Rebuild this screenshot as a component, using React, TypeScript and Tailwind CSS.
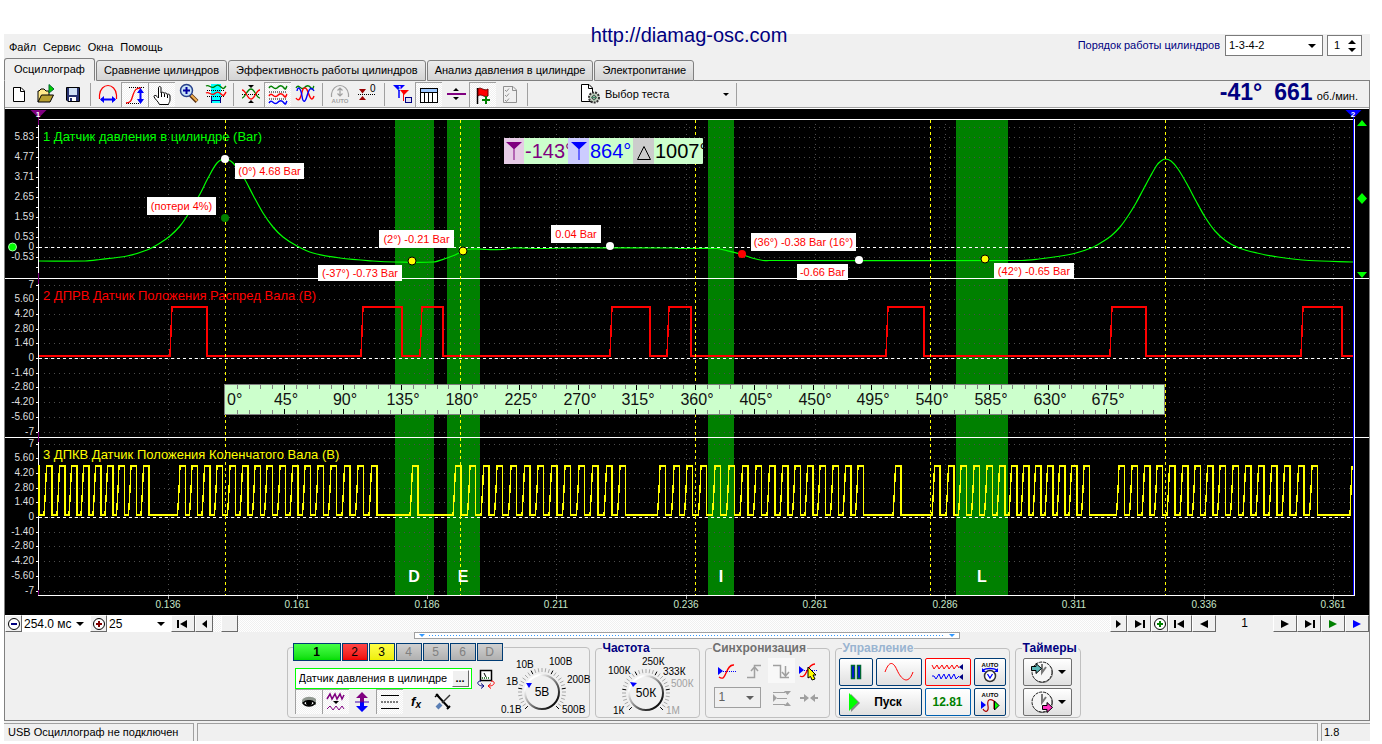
import type { ReactNode } from "react";
import clsx from "clsx";

type Pt = [number, number];

/* ---------- chart data ---------- */

const pressure: Pt[] = [
  [39, 261], [85, 261], [100, 259.5], [127, 256], [147, 250], [160, 243], [170, 236], [180, 226],
  [189, 213], [200, 194], [208, 178], [217, 163], [225, 159], [233, 163], [244, 178], [253, 195],
  [263, 213], [273, 227], [283, 237], [297, 246], [313, 253], [340, 258], [373, 261], [395, 262],
  [433, 262], [447, 258], [455, 255], [463, 251], [472, 249], [487, 249.5], [503, 249.5], [513, 248],
  [540, 248.5], [573, 248], [673, 248], [680, 248.5], [717, 248.5], [724, 250], [742, 254.5], [752, 258],
  [763, 260.5], [769, 260.5], [1022, 260.5], [1039, 259], [1061, 256], [1076, 253], [1091, 248], [1102, 242],
  [1111, 236], [1120, 227], [1128, 216], [1136, 203], [1143, 190], [1150, 177], [1157, 165], [1161, 161],
  [1165, 159], [1171, 161], [1178, 169], [1187, 184], [1196, 201], [1205, 217], [1215, 231], [1226, 241],
  [1239, 248], [1257, 253], [1278, 257], [1309, 260.5], [1353, 262],
];

const camPulses: Pt[] = [
  [172, 207], [363, 402], [422, 443], [612, 650], [669, 691], [888, 924], [1112, 1146], [1303, 1342],
];

const crankPulses = [
  46.5, 59.5, 71.5, 83.5, 95.5, 107.5, 119, 131, 143.5,
  180, 192, 204.5, 217, 230, 242.5, 255, 267, 280, 292.5, 305, 318, 331, 344.5, 358, 371.5,
  412.5, 455.5, 470, 483.6, 497, 511, 524.5, 538, 551.5, 565, 579, 592.5, 606.5, 620,
  660, 674, 687, 701, 715, 729, 742.5, 756, 769.5, 782.5, 795, 807.5, 820, 833, 845.5, 858,
  895.5, 934.5, 948.5, 961, 974, 987, 999.5, 1011.5, 1023.5, 1035.5, 1047.5, 1059.5, 1071.5, 1084,
  1119, 1132, 1144.5, 1157, 1169.5, 1182.5, 1195, 1207.5, 1220, 1233, 1245.5, 1258.5, 1271.5, 1284.5,
  1298.5, 1312,
];

const barTicks: [string, number][] = [
  ["5.83", 137], ["4.77", 157], ["3.71", 177], ["2.65", 197], ["1.59", 217], ["0.53", 237], ["0", 247], ["-0.53", 257],
];
const voltTicks = ["7", "5.60", "4.20", "2.80", "1.40", "0", "-1.40", "-2.80", "-4.20", "-5.60", "-7"];
const voltY = (zero: number, i: number) => Math.round(zero + (i - 5) * 14.7);

const timeTicks: [string, number][] = [
  ["0.136", 168], ["0.161", 297], ["0.186", 427], ["0.211", 556], ["0.236", 686],
  ["0.261", 815], ["0.286", 945], ["0.311", 1074], ["0.336", 1204], ["0.361", 1333],
];

const bands: [string, number, number, number][] = [
  ["D", 395, 39, 414], ["E", 447, 33, 463], ["I", 708, 26, 721], ["L", 956, 52, 982],
];

const notes: [string, number, number, number, number][] = [
  ["(0°) 4.68 Bar", 235, 163, 69, 16],
  ["(потери 4%)", 147, 197, 69, 18],
  ["(2°) -0.21 Bar", 379, 230, 75, 18],
  ["(-37°) -0.73 Bar", 318, 265, 84, 16],
  ["0.04 Bar", 551, 225, 50, 18],
  ["(36°) -0.38 Bar (16°)", 751, 233, 105, 18],
  ["-0.66 Bar", 797, 264, 51, 16],
  ["(42°) -0.65 Bar", 994, 263, 80, 16],
];

const dots: [number, number, string][] = [
  [225, 159, "#fff"], [225, 218, "#008000"], [412, 261, "#ff0"], [463, 251, "#ff0"],
  [610, 246, "#fff"], [742, 254, "#f00"], [859, 260, "#fff"], [985, 259, "#ff0"],
];

function smooth(p: Pt[]) {
  let d = `M${p[0][0]} ${p[0][1]}`;
  for (let i = 0; i < p.length - 1; i++) {
    const a = p[Math.max(i - 1, 0)], b = p[i], c = p[i + 1], e = p[Math.min(i + 2, p.length - 1)];
    const dx = (c[0] - b[0]) / 3;
    const s1 = (c[1] - a[1]) / (c[0] - a[0]);
    const s2 = (e[1] - b[1]) / (e[0] - b[0]);
    d += `C${b[0] + dx} ${b[1] + s1 * dx} ${c[0] - dx} ${c[1] - s2 * dx} ${c[0]} ${c[1]}`;
  }
  return d;
}

const camPath =
  "M39 356" + camPulses.map(([a, b]) => `H${a - 2}L${a - 1} 331L${a} 307H${b}V356`).join("") + "H1353";
const crankPath =
  "M39 465V515" +
  crankPulses.map((x) => `H${x - 2.5}L${x - 1} 490L${x} 466H${x + 5.5}V515`).join("") +
  "H1350L1352 466";

function Chart() {
  const rows = [
    ...Array.from({ length: 15 }, (_, i) => 127 + i * 10),
    ...voltTicks.map((_, i) => voltY(358, i)),
    ...voltTicks.map((_, i) => voltY(517, i)),
  ];
  return (
    <svg viewBox="5 109 1364 506" className="block w-full bg-black font-['Liberation_Sans',sans-serif]">
      <g shapeRendering="crispEdges">
        {bands.map(([k, x, w]) => (
          <rect key={k} x={x} y={120} width={w} height={475} fill="#008000" />
        ))}
        <g stroke="#4c4c4c" strokeDasharray="1 4">
          {rows.map((y) => <path key={y} d={`M44 ${y + 0.5}H1353`} />)}
          {timeTicks.map(([t, x]) => <path key={t} d={`M${x + 0.5} 124V595`} />)}
        </g>
        <g stroke="#fff">
          <path d="M39 247.5H1353M39 358.5H1353M39 517.5H1353" strokeDasharray="3 3" />
          <path d="M38 119.5H1355M5 278.5H1369M5 437.5H1369M38 595.5H1355M38.5 119V596M1354.5 119V596" />
          {rows.map((y) => <path key={y} d={`M36 ${y + 0.5}H39`} />)}
          <path d="M36 247.5H39" />
        </g>
        <path
          d={timeTicks.map(([, x]) => `M${x + 0.5} 596V599`).join("")}
          stroke="#aaa"
        />
        <path d="M38.5 117V125M38.5 273V284M38.5 432V442M38.5 590V595" stroke="#800080" />
        <path d="M1353.5 118V595" stroke="#0000ff" />
      </g>

      <g fontSize="10" fill="#dfdfdf" textAnchor="end">
        {barTicks.map(([t, y]) => <text key={t} x="34" y={y + 3}>{t}</text>)}
        {voltTicks.map((t, i) => <text key={t} x="34" y={voltY(358, i) + 3}>{t}</text>)}
        {voltTicks.map((t, i) => <text key={t} x="34" y={voltY(517, i) + 3}>{t}</text>)}
      </g>
      <g fontSize="10" fill="#c8e6c8" textAnchor="middle">
        {timeTicks.map(([t, x]) => <text key={t} x={x} y="608">{t}</text>)}
      </g>
      <g fontSize="16" fontWeight="bold" fill="#fff" textAnchor="middle">
        {bands.map(([k, , , c]) => <text key={k} x={c} y="582">{k}</text>)}
      </g>
      <g fontSize="13">
        <text x="43" y="141" fill="#0f0">1 Датчик давления в цилиндре (Bar)</text>
        <text x="43" y="300" fill="#f00">2 ДПРВ Датчик Положения Распред Вала (В)</text>
        <text x="43" y="459" fill="#ff0">3 ДПКВ Датчик Положения Коленчатого Вала (В)</text>
      </g>

      <g fill="none">
        <path d={smooth(pressure)} stroke="#0f0" strokeWidth="1.2" />
        <path d={camPath} stroke="#f00" strokeWidth="1.5" shapeRendering="crispEdges" />
        <path d={crankPath} stroke="#ff0" strokeWidth="1.4" shapeRendering="crispEdges" />
        <path
          d="M225.5 120V595M460.5 120V595M695.5 120V595M930.5 120V595M1165.5 120V595"
          stroke="#ff0" strokeDasharray="3 3" shapeRendering="crispEdges"
        />
      </g>

      {notes.map(([t, x, y, w, h]) => (
        <g key={t}>
          <rect x={x} y={y} width={w} height={h} fill="#fff" />
          <text x={x + w / 2} y={y + h / 2 + 4} fontSize="11" fill="#f00" textAnchor="middle">{t}</text>
        </g>
      ))}
      {dots.map(([x, y, c]) => (
        <circle key={x + c} cx={x} cy={y} r="4" fill={c} stroke={c === "#ff0" ? "#000" : "none"} />
      ))}
      <circle cx="12.5" cy="247" r="4" fill="#0f0" stroke="#a0ffa0" />

      {/* cursors */}
      <path d="M30.5 110H46.5L38.5 118Z" fill="#800080" />
      <path d="M1345.5 110H1361.5L1353.5 118Z" fill="#0000ff" />
      <g fontSize="8" fontWeight="bold" fill="#fff" textAnchor="middle">
        <text x="38" y="117">1</text>
        <text x="1353" y="117">2</text>
      </g>
      <path d="M1362 120L1367 126H1357ZM1362 193L1367 198.5L1362 204L1357 198.5ZM1357 272H1367L1362 278Z" fill="#0f0" />

      {/* degree ruler */}
      <g shapeRendering="crispEdges">
        <rect x="224.5" y="384.5" width="940" height="30" fill="#ccffcc" stroke="#808080" />
        {Array.from({ length: 79 }, (_, i) => i + 1).map((i) => {
          const x = Math.round(225 + i * 11.75) + 0.5;
          const major = i % 5 === 0;
          const n = major ? 5 : 4;
          return <path key={i} d={`M${x} 385V${385 + n}M${x} 414V${414 - n}`} stroke={major ? "#000" : "#808080"} />;
        })}
      </g>
      <g fontSize="16" fill="#111">
        <text x="227" y="405">0°</text>
        {Array.from({ length: 15 }, (_, i) => i + 1).map((i) => (
          <text key={i} x={Math.round(227 + i * 58.75)} y="405" textAnchor="middle">{i * 45}°</text>
        ))}
      </g>

      {/* cursor readout */}
      <g>
        <rect x="504" y="138" width="199" height="26" rx="1" fill="#ccffcc" />
        <rect x="504" y="138" width="20" height="26" fill="#e6cce6" />
        <rect x="568" y="138" width="21" height="26" fill="#ccccff" />
        <rect x="633" y="138" width="21" height="26" fill="#cccccc" />
        <path d="M506 142H522L514.5 149V160H513.5V149Z" fill="#800080" />
        <path d="M571 142H587L579.5 149V160H578.5V149Z" fill="#0000ff" />
        <path d="M644 146.5L650.5 159.5H637.5Z" fill="none" stroke="#000" />
        <g fontSize="20">
          <svg x="524" y="138" width="44" height="26"><text x="1" y="20" fill="#800080">-143°</text></svg>
          <svg x="589" y="138" width="44" height="26"><text x="1" y="20" fill="#0000ff">864°</text></svg>
          <svg x="654" y="138" width="49" height="26"><text x="1" y="20" fill="#000">1007°</text></svg>
        </g>
      </g>
    </svg>
  );
}

/* ---------- icons ---------- */

function Svg({ w = 22, h = 22, children }: { w?: number; h?: number; children: ReactNode }) {
  return (
    <svg width={w} height={h} viewBox={`0 0 ${w} ${h}`} fill="none" className="shrink-0">
      {children}
    </svg>
  );
}

const IconNew = () => (
  <Svg>
    <path d="M5.5 4.5H13L16.5 8V18.5H5.5Z" fill="#fff" stroke="#000" />
    <path d="M12.5 4.5V8.5H16.5" stroke="#000" />
  </Svg>
);
const IconOpen = () => (
  <Svg>
    <path d="M3 19V8H4L6 6H9L11 8H14V12" fill="#ffe98a" stroke="#000" />
    <path d="M3 19L6.5 12H18.5L15 19Z" fill="#b8a030" stroke="#000" />
    <path d="M14 1.5V10L19 6Z" fill="#00d000" stroke="#063" />
  </Svg>
);
const IconSave = () => (
  <Svg>
    <path d="M4.5 4.5H17.5V18.5H6L4.5 17Z" fill="#26306e" stroke="#000" />
    <rect x="7" y="5" width="8" height="7" fill="#cfe0f5" />
    <rect x="7" y="14" width="7" height="4" fill="#fff" />
    <rect x="8" y="15" width="2" height="3" fill="#26306e" />
  </Svg>
);
const IconArc = () => (
  <Svg>
    <path d="M2.5 16V12C3 6 7 2.5 11 2.5S19 6 19.5 12V16" stroke="#f00" strokeWidth="1.2" />
    <path d="M4 16.5H18" stroke="#00f" strokeWidth="2" />
    <path d="M3 16.5L7 13V20ZM19 16.5L15 13V20Z" fill="#00f" />
  </Svg>
);
const IconSlope = () => (
  <Svg>
    <path d="M5 3.5H20M2 19.5H16" stroke="#000" strokeDasharray="1 1" />
    <path d="M2 19C7 19 7.5 16 9 11S12 4 17 4" stroke="#f00" strokeWidth="1.3" />
    <path d="M16.5 7V17" stroke="#00f" strokeWidth="2" />
    <path d="M16.5 4L20 9H13ZM16.5 20L20 15H13Z" fill="#00f" />
  </Svg>
);
const IconHand = () => (
  <Svg>
    <path
      d="M8.5 20.5C7 17 4 15.5 3 12.5C3 11 5 11 6 12.5L7.5 14V4C7.5 2 10 2 10 4V9C10.5 7.8 13 8 13 9.5C13.5 8.5 16 8.8 16 10.5C16.8 9.8 19 10 19 12V16C19 18 17.5 19 17.5 20.5Z"
      fill="#fff" stroke="#000"
    />
    <path d="M10.5 9V13M13.5 10V13M16.5 11V14" stroke="#000" />
  </Svg>
);
const IconZoom = () => (
  <Svg>
    <path d="M12.5 12L19 18.5" stroke="#5a3010" strokeWidth="4" />
    <path d="M13 12L19 18" stroke="#f0b050" strokeWidth="2" />
    <circle cx="8.5" cy="7.5" r="6" fill="#c9e4f7" stroke="#27408b" strokeWidth="1.5" />
    <path d="M5 7.5H12M8.5 4V11" stroke="#0000a0" strokeWidth="2" />
  </Svg>
);
const IconBandWaves = () => (
  <Svg>
    <rect x="6" y="1" width="10" height="19" fill="#00ffff" />
    <path d="M2 7.5H20M2 13.5H20" stroke="#000" strokeDasharray="1 1" />
    <path d="M1 3C4 1 6 6 9 4S13 1 16 4S19 5 21 3" stroke="#008000" strokeWidth="1.4" />
    <path d="M1 10C4 8 6 13 9 11S13 8 16 11S19 12 21 9" stroke="#f00" strokeWidth="1.4" />
    <path d="M6.5 14V20M15.5 14V20M7 17.5H15" stroke="#000080" />
  </Svg>
);
const IconCross = () => (
  <Svg>
    <path d="M2 11.5H20" stroke="#000" strokeDasharray="1 1" />
    <path d="M2 15C5 15 7 6 11 6S16 15 20 15" stroke="#008000" strokeWidth="1.3" />
    <path d="M2 7C6 7 7 16 11 16S16 7 20 7" stroke="#f00" strokeWidth="1.3" />
    <path d="M8 2H14L11 5ZM8 20H14L11 17Z" fill="#000" />
  </Svg>
);
const wave = (y: number) => `M2 ${y + 1}C5 ${y - 4} 7 ${y + 4} 10 ${y + 1}S15 ${y - 2} 17 ${y + 1}S19 ${y} 20 ${y - 1}`;
const IconThreeWaves = () => (
  <Svg>
    <path d="M2 8H20M2 15H20" stroke="#000" strokeDasharray="1 1" />
    <path d={wave(3)} stroke="#008000" strokeWidth="1.5" />
    <path d={wave(11)} stroke="#f00" strokeWidth="1.5" />
    <path d={wave(18)} stroke="#00f" strokeWidth="1.5" />
  </Svg>
);
const IconOverlay = () => (
  <Svg>
    <path d={wave(4)} stroke="#008000" strokeWidth="1.4" />
    <path d="M2 15C5 20 7 14 8 9S12 3 14 9S18 19 20 13" stroke="#f00" strokeWidth="1.4" />
    <path d="M3 8C4 2 7 6 8 13S11 20 13 13S17 3 20 8" stroke="#00f" strokeWidth="1.4" />
  </Svg>
);
const IconAutoGray = () => (
  <Svg>
    <path d="M2.5 14V11C3 6 7 2.5 11 2.5S19 6 19.5 11V14M11 5V13M8.5 7.5L11 5L13.5 7.5M8.5 10.5L11 13L13.5 10.5" stroke="#a0a0a0" strokeWidth="1.2" />
    <text x="11" y="20" fontSize="6" fontWeight="bold" fill="#a0a0a0" textAnchor="middle">AUTO</text>
  </Svg>
);
const IconZero = () => (
  <Svg>
    <path d="M2 11.5H20" stroke="#000" strokeDasharray="1 1" />
    <path d="M3 6H10L6.5 10.5ZM3 17H10L6.5 13Z" fill="#900" />
    <text x="14" y="9" fontSize="10" fill="#000">0</text>
  </Svg>
);
const IconMarkers = () => (
  <Svg>
    <path d="M2 2H14L8 8Z" fill="#00f" />
    <path d="M9 7H18L13 12Z" fill="#f00" />
    <path d="M8 6V15" stroke="#00f" strokeWidth="1.5" />
    <path d="M12.5 10V18" stroke="#f00" />
    <rect x="14.5" y="14.5" width="6" height="5" fill="#dde" stroke="#000080" />
    <text x="7" y="7" fontSize="6" fontWeight="bold" fill="#fff">1</text>
  </Svg>
);
const IconTable = () => (
  <Svg>
    <rect x="2.5" y="4.5" width="17" height="14" fill="#fff" stroke="#000" />
    <rect x="3" y="5" width="16" height="3" fill="#9cc8ff" />
    <path d="M3 8.5H19M6.5 8V18M10.5 8V18M14.5 8V18" stroke="#000" />
  </Svg>
);
const IconSplit = () => (
  <Svg>
    <path d="M2 11H21" stroke="#800080" strokeWidth="2" />
    <path d="M8 8H14L11 5ZM8 14H14L11 17Z" fill="#000" />
  </Svg>
);
const IconFlag = () => (
  <Svg>
    <path d="M5.5 4V20" stroke="#000" strokeWidth="1.5" />
    <path d="M6 5C9 2 12 8 16 5V12C12 14 9 9 6 12Z" fill="#f00" stroke="#600" />
    <path d="M10 16H18M14 12V20" stroke="#008000" strokeWidth="2" />
  </Svg>
);
const IconChecklist = () => (
  <Svg>
    <path d="M4.5 3.5H14L17.5 7V19.5H4.5ZM13.5 4V7.5H17" stroke="#909090" />
    <path d="M6 7L7.5 8.5L10 5.5M6 12L7.5 13.5L10 10.5M6 17L7.5 18.5L10 15.5" stroke="#909090" />
  </Svg>
);
const IconTest = () => (
  <Svg>
    <path d="M2.5 1.5H10L13.5 5V18.5H2.5Z" fill="#fff" stroke="#000" />
    <path d="M9.5 2V5.5H13" stroke="#000" />
    <circle cx="15" cy="14.5" r="5" fill="#c9d3c4" stroke="#333" strokeWidth="2" strokeDasharray="2 1" />
    <circle cx="15" cy="14.5" r="2" fill="#fff" stroke="#333" />
    <path d="M12 14.5H18M15 11.5V17.5" stroke="#486" />
  </Svg>
);

/* ---------- controls ---------- */

const Arrow = ({ className }: { className?: string }) => (
  <svg width="8" height="4" viewBox="0 0 8 4" className={className}><path d="M0 0H8L4 4Z" fill="currentColor" /></svg>
);

const pressed =
  "border-t border-l border-[#a0a0a0] bg-[repeating-conic-gradient(#ffffff_0_25%,#f0f0f0_0_50%)] bg-[length:2px_2px]";

function Tool({ label, on, children }: { label: string; on?: boolean; children: ReactNode }) {
  return (
    <button aria-label={label} className={clsx("flex h-[25px] w-[27px] items-center justify-center", on && pressed)}>
      {children}
    </button>
  );
}

const Sep = () => (
  <div className="flex w-2 justify-center"><div className="h-[23px] w-px bg-[#a0a0a0]" /></div>
);

function Dropdown({ label, value, className }: { label: string; value: string; className?: string }) {
  return (
    <div className={clsx("relative", className)}>
      <select aria-label={label} className="h-full w-full appearance-none bg-transparent px-[2px] outline-none">
        <option>{value}</option>
      </select>
      <Arrow className="pointer-events-none absolute top-1/2 right-[6px] -translate-y-1/2" />
    </div>
  );
}

function Toolbar() {
  return (
    <div className="flex h-[28px] items-center border-b border-b-white pb-px shadow-[inset_0_-1px_0_#a0a0a0]">
      <Tool label="Новый"><IconNew /></Tool>
      <Tool label="Открыть"><IconOpen /></Tool>
      <Tool label="Сохранить"><IconSave /></Tool>
      <Sep />
      <Tool label="Период"><IconArc /></Tool>
      <Tool label="Амплитуда" on><IconSlope /></Tool>
      <Tool label="Рука" on><IconHand /></Tool>
      <Tool label="Масштаб"><IconZoom /></Tool>
      <Tool label="Интервал"><IconBandWaves /></Tool>
      <Sep />
      <Tool label="Центрировать"><IconCross /></Tool>
      <Tool label="Раздельно" on><IconThreeWaves /></Tool>
      <Tool label="Совместно"><IconOverlay /></Tool>
      <Sep />
      <Tool label="Авто"><IconAutoGray /></Tool>
      <Tool label="Ноль"><IconZero /></Tool>
      <Sep />
      <Tool label="Маркеры"><IconMarkers /></Tool>
      <Tool label="Таблица" on><IconTable /></Tool>
      <Tool label="Разделитель"><IconSplit /></Tool>
      <Tool label="Флаг" on><IconFlag /></Tool>
      <Tool label="Список"><IconChecklist /></Tool>
      <Sep />
      <button className="ml-12 flex h-[25px] w-[153px] items-center gap-1 pr-[3px]">
        <IconTest />
        <span className="grow text-left">Выбор теста</span>
        <Arrow className="h-[3px] w-[6px]" />
      </button>
      <Sep />
      <div className="ml-auto flex items-baseline pr-[11px] text-[23px] leading-6 font-bold text-[#000080]">
        <span>-41°</span>
        <span className="ml-3">661</span>
        <span className="ml-1 text-[11px] font-normal text-black">об./мин.</span>
      </div>
    </div>
  );
}

const bevel = "border border-t-white border-l-white border-r-[#696969] border-b-[#696969] bg-[#f0f0f0]";

const nav = {
  left: "M10 0V8L5 4Z",
  right: "M4 0V8L9 4Z",
  first: "M1 0H3V8H1ZM11 0V8L4 4Z",
  last: "M3 0V8L10 4ZM11 0H13V8H11Z",
  play: "M3 0V8L11 4Z",
  back: "M11 0V8L3 4Z",
};

function NavButton({ label, d, className = "w-6 text-black" }: { label: string; d: string; className?: string }) {
  return (
    <button aria-label={label} className={clsx("flex h-[17px] items-center justify-center", bevel, className)}>
      <svg width="14" height="8" viewBox="0 0 14 8"><path d={d} fill="currentColor" /></svg>
    </button>
  );
}

function ZoomButton({ label, color, plus }: { label: string; color: string; plus?: boolean }) {
  return (
    <button aria-label={label} className={clsx("flex h-[17px] w-[17px] items-center justify-center", bevel)}>
      <Svg w={14} h={14}>
        <circle cx="7" cy="7" r="5.5" fill="#fff" stroke="#000" />
        <path d={plus ? "M4 7H10M7 4V10" : "M4 7H10"} stroke={color} strokeWidth="2" />
      </Svg>
    </button>
  );
}

function ScrollRow() {
  return (
    <div className="flex h-[17px] items-center">
      <ZoomButton label="Уменьшить" color="#000080" />
      <Dropdown label="Развёртка" value="254.0 мс" className="h-[17px] w-[68px] bg-white text-[12px] leading-4" />
      <ZoomButton label="Увеличить" color="#800000" plus />
      <Dropdown label="Шаг" value="25" className="h-[17px] w-[64px] bg-white text-[12px] leading-4" />
      <NavButton label="В начало" d={nav.first} />
      <NavButton label="Назад" d={nav.left} className="w-[18px] text-black" />
      <div className="h-[17px] grow bg-[repeating-conic-gradient(#ffffff_0_25%,#f0f0f0_0_50%)] bg-[length:2px_2px] pl-2">
        <div className={clsx("h-[17px] w-[17px]", bevel)} />
      </div>
      <NavButton label="Вперёд" d={nav.right} className="w-[17px] text-black" />
      <NavButton label="В конец" d={nav.last} />
      <ZoomButton label="Добавить кадр" color="#008000" plus />
      <NavButton label="Первый кадр" d={nav.first} />
      <NavButton label="Предыдущий кадр" d={nav.back} />
      <span className="w-[57px] text-center text-[12px]">1</span>
      <NavButton label="Следующий кадр" d={nav.play} />
      <NavButton label="Последний кадр" d={nav.last} />
      <NavButton label="Воспроизвести" d={nav.play} className="w-6 text-[#008000]" />
      <NavButton label="Воспроизвести всё" d={nav.play} className="w-6 text-[#0000ff]" />
    </div>
  );
}

type KnobLabel = [string, number, number, boolean?];

function Knob({ value, labels, className, pointer }: { value: string; labels: KnobLabel[]; className?: string; pointer: string }) {
  // ticks run clockwise from lower left to lower right
  const ticks = Array.from({ length: 31 }, (_, i) => -225 + i * 9);
  return (
    <svg width="100" height="66" viewBox="-50 -40 100 66" className={clsx("shrink-0", className)}>
      <defs>
        <linearGradient id="rim" x1="0" y1="0" x2="1" y2="1">
          <stop offset="0.2" stopColor="#fff" />
          <stop offset="0.5" stopColor="#888" />
          <stop offset="0.9" stopColor="#000" />
        </linearGradient>
      </defs>
      {ticks.map((a, i) => {
        const r = (a * Math.PI) / 180;
        return (
          <path
            key={a}
            d={`M${20 * Math.cos(r)} ${20 * Math.sin(r)}L${24 * Math.cos(r)} ${24 * Math.sin(r)}`}
            stroke={i % 6 === 0 ? "#000" : "#a8a8a8"}
          />
        );
      })}
      <circle r="17" fill="#f0f0f0" stroke="url(#rim)" strokeWidth="2" />
      <path d={pointer} fill="#0000ff" />
      <text y="4" fontSize="12" textAnchor="middle">{value}</text>
      {labels.map(([t, x, y, off]) => (
        <text key={t} x={x} y={y} fontSize="10" fill={off ? "#a0a0a0" : "#000"}>{t}</text>
      ))}
    </svg>
  );
}

const legend = "ml-[6px] px-px text-[12px] leading-[10px] font-bold";
const group = "h-[75px] min-w-0 rounded-[4px] border border-[#c0c0c0]";

const channels = [
  { n: "1", cls: "w-12 bg-linear-to-b from-[#4f4] to-[#0d0] font-bold text-black" },
  { n: "2", cls: "w-[26px] bg-linear-to-b from-[#f44] to-[#e00] text-black" },
  { n: "3", cls: "w-[26px] bg-linear-to-b from-[#ff4] to-[#ee0] text-black" },
  { n: "4", cls: "w-[26px] bg-linear-to-b from-[#d0d0d0] to-[#b0b0b0] text-[#808080]" },
  { n: "5", cls: "w-[26px] bg-linear-to-b from-[#d0d0d0] to-[#b0b0b0] text-[#808080]" },
  { n: "6", cls: "w-[26px] bg-linear-to-b from-[#d0d0d0] to-[#b0b0b0] text-[#808080]" },
  { n: "D", cls: "w-[26px] bg-linear-to-b from-[#d0d0d0] to-[#b0b0b0] text-[#808080]" },
];

function ChannelPanel() {
  return (
    <section className="mt-1 flex h-[71px] w-[303px] rounded-[4px] border border-[#c0c0c0] pl-[5px]">
      <div className="-mt-[5px] w-[211px] shrink-0">
        <div className="flex gap-px bg-[#f0f0f0]">
          {channels.map((c) => (
            <button key={c.n} className={clsx("h-[18px] border border-[#003c74] text-[12px] leading-4", c.cls)}>{c.n}</button>
          ))}
        </div>
        <div className="mt-[7px] ml-[2px] flex items-center gap-1">
          <div className="flex h-[21px] w-[177px] items-center border border-[#00ff00] bg-white pr-px">
            <input aria-label="Канал" defaultValue="Датчик давления в цилиндре" className="w-[156px] min-w-0 bg-transparent pl-[3px] outline-none" />
            <button aria-label="Обзор" className={clsx("h-[17px] w-[17px] text-[11px] leading-[9px] font-bold", bevel)}>...</button>
          </div>
          <button aria-label="Инвертировать">
            <Svg w={20} h={20}>
              <rect x="4.5" y="1.5" width="11" height="10" fill="#fff" stroke="#000" strokeWidth="1.5" />
              <path d="M6 9H14" stroke="#484" strokeDasharray="1 1" strokeWidth="2" />
              <path d="M10 8L8 4" stroke="#000" />
              <path d="M5 12C0 12 1 17 7 17M5 14.5L8 17L5 19.5" stroke="#000080" />
              <path d="M15 12C20 12 19 17 13 17M15 14.5L12 17L15 19.5" stroke="#f00" />
            </Svg>
          </button>
        </div>
        <div className="ml-[2px] flex">
          <Tool label="Показать" on>
            <Svg>
              <path d="M4 9C7 5 14 5 18 8V14L4 12Z" fill="#909890" />
              <path d="M5 12C8 9 14 9 17 12C14 16 8 16 5 12Z" fill="#fff" stroke="#000" strokeWidth="1.5" />
              <circle cx="11" cy="12" r="3" fill="#000" />
            </Svg>
          </Tool>
          <Tool label="Фильтр" on>
            <Svg>
              <path d="M2 8L5 3L7 8L10 3L12 8L15 3L17 8L19 4" stroke="#800080" strokeWidth="1.5" />
              <path d="M8 10H14L11 13Z" fill="#000" />
              <path d="M2 18L5 15L8 19L11 15L14 19L17 15L19 18" stroke="#800080" />
            </Svg>
          </Tool>
          <Tool label="Сдвиг">
            <Svg>
              <path d="M11 1L17 7H13V11H9V7H5Z" fill="#800080" />
              <path d="M11 21L17 15H13V11H9V15H5Z" fill="#00f" />
              <path d="M4 11H18" stroke="#40a" />
            </Svg>
          </Tool>
          <Tool label="Линии" on>
            <Svg>
              <path d="M2 4.5H20M2 17.5H20" stroke="#000" />
              <path d="M2 11H20" stroke="#000" strokeDasharray="2 1" />
            </Svg>
          </Tool>
          <Tool label="Функция">
            <span className="text-[13px] leading-4 font-bold italic">f<sub className="text-[10px]">x</sub></span>
          </Tool>
          <Tool label="Настройки">
            <Svg>
              <path d="M5 4L17 17" stroke="#000" strokeWidth="2" />
              <path d="M4 3L7 6M3 6L6 3" stroke="#000" strokeWidth="1.5" />
              <path d="M18 4L10 12" stroke="#333" strokeWidth="1.5" />
              <path d="M9 13L5 17" stroke="#5b7fb5" strokeWidth="4" />
              <path d="M15 18L18 15" stroke="#000" strokeWidth="2" />
            </Svg>
          </Tool>
        </div>
      </div>
      <Knob
        value="5В" className="mt-1 -ml-3" pointer="M-16 -9H-10L-13 -4Z"
        labels={[["10В", -26, -24], ["100В", 7, -27], ["1В", -36, -7], ["200В", 25, -9], ["0.1В", -41, 21], ["500В", 20, 21]]}
      />
    </section>
  );
}

function SyncPanel() {
  return (
    <fieldset className={clsx(group, "w-[125px]")}>
      <legend className={clsx(legend, "text-[#707070]")}>Синхронизация</legend>
      <div className="flex pt-[5px] pl-2">
        <Tool label="Уровень">
          <Svg>
            <path d="M3 11.5H20" stroke="#00f" strokeDasharray="1 1" />
            <path d="M3 17C11 23 9 4 18 5" stroke="#f00" strokeWidth="1.4" />
            <path d="M2 7L7 11L2 15Z" fill="#00f" />
          </Svg>
        </Tool>
        <Tool label="Передний фронт">
          <Svg>
            <path d="M4 17.5H11.5V5.5H18M8 11L11.5 7L15 11" stroke="#a0a0a0" strokeWidth="1.5" />
          </Svg>
        </Tool>
        <button aria-label="Задний фронт" className="flex h-[25px] w-[27px] items-center justify-center bg-[#f8f8f8]">
          <Svg>
            <path d="M3 5.5H10.5V17.5H19M12 12L15.5 16L19 12M15.5 6V15" stroke="#a0a0a0" strokeWidth="1.5" />
          </Svg>
        </button>
        <Tool label="Автосинхронизация">
          <Svg>
            <path d="M3 10.5H20" stroke="#00f" strokeDasharray="1 1" />
            <path d="M3 16C10 20 9 4 18 4" stroke="#f00" strokeWidth="1.4" />
            <path d="M2 6L7 10L2 14Z" fill="#00f" />
            <path d="M11 7L19 15H16L18 19L15 20L13.5 16.5L11 18Z" fill="#ff0" stroke="#000" />
          </Svg>
        </Tool>
      </div>
      <div className="flex items-center pt-[2px] pl-2">
        <Dropdown label="Канал синхронизации" value="1" className="mr-2 h-[21px] w-[47px] border border-[#a0a0a0] pl-[2px] text-[12px] text-[#606060]" />
        <Tool label="Гистерезис">
          <Svg>
            <path d="M2 5.5H14M2 17.5H14M6 11.5H16" stroke="#a0a0a0" />
            <path d="M2 7L6 11L2 15ZM13 4H20L16.5 8ZM13 19H20L16.5 15Z" fill="#a0a0a0" />
          </Svg>
        </Tool>
        <Tool label="Сжать">
          <Svg>
            <path d="M2 11H9M13 11H20" stroke="#a0a0a0" strokeWidth="2" />
            <path d="M6 7L11 11L6 15ZM17 7L12 11L17 15Z" fill="#a0a0a0" />
          </Svg>
        </Tool>
      </div>
    </fieldset>
  );
}

const xp = "flex h-7 items-center justify-center rounded-[2px] border bg-linear-to-b from-white to-[#e0e0e0]";

function ControlPanel() {
  return (
    <fieldset className={clsx(group, "w-[175px]")}>
      <legend className={clsx(legend, "text-[#99b4d1]")}>Управление</legend>
      <div className="grid w-[170px] grid-cols-[34px_46px_46px_32px] gap-x-[3px] gap-y-[2px] pt-[5px] pl-[3px]">
        <button aria-label="Пауза" className={clsx(xp, "border-[#003c74]")}>
          <Svg w={14} h={16}><path d="M2.5 1.5H5.5V14.5H2.5ZM8.5 1.5H11.5V14.5H8.5Z" fill="#00f" stroke="#063" strokeWidth="1.5" /></Svg>
        </button>
        <button aria-label="Синус" className={clsx(xp, "border-[#003c74]")}>
          <Svg w={30} h={20}><path d="M1 10C5 -1 9 -1 13 8S24 24 29 10" stroke="#f00" /></Svg>
        </button>
        <button aria-label="Поток" className={clsx(xp, "border-[#ff0000]")}>
          <Svg w={34} h={20}>
            <path d="M1 3L3 7L6 3L8 7L11 3L13 7L16 3L18 7L21 3L23 7L26 3L28 6" stroke="#f00" />
            <path d="M1 14H3L5 17L8 12L10 17L13 12L15 17L18 12L20 17L23 12L25 17L28 14" stroke="#00f" />
            <path d="M32 2V8L28 5ZM32 12V18L28 15Z" fill="#000080" />
          </Svg>
        </button>
        <button aria-label="Автодиапазон" className={clsx(xp, "border-[#003c74]")}>
          <Svg w={26} h={26}>
            <text x="13" y="8" fontSize="6" fontWeight="bold" fill="#000" textAnchor="middle">AUTO</text>
            <path d="M6 11C9 9 17 9 20 11" stroke="#00f" strokeWidth="1.5" />
            <path d="M5 9V13H9ZM21 9V13H17Z" fill="#00f" />
            <circle cx="13" cy="17" r="5.5" fill="#fff" stroke="#333" strokeWidth="1.5" />
            <path d="M10.5 15L13 19L15.5 15" stroke="#00f" strokeWidth="1.3" />
          </Svg>
        </button>
        <button className={clsx(xp, "col-span-2 border-[#003c74] pr-1 pl-2 text-[12px] font-bold")}>
          <Svg w={12} h={20}><path d="M3 2V20L12 11Z" fill="#888" /><path d="M1 1V19L10 10Z" fill="#0f0" /></Svg>
          <span className="grow text-center">Пуск</span>
        </button>
        <button className={clsx(xp, "border-[#0060b0] from-[#f0f0f0] to-[#f0f0f0] text-[12px] font-bold text-[#008000]")}>12.81</button>
        <button aria-label="Автозапуск" className={clsx(xp, "border-[#003c74]")}>
          <Svg w={26} h={26}>
            <text x="13" y="8" fontSize="6" fontWeight="bold" fill="#000" textAnchor="middle">AUTO</text>
            <path d="M6 20C8 24 12 23 11 17S12 9 17 12V20" stroke="#a00" strokeWidth="1.2" />
            <path d="M4 12V20L9 16Z" fill="#00f" />
            <path d="M17.5 12V21L22 16.5Z" fill="#0f0" stroke="#000" />
          </Svg>
        </button>
      </div>
    </fieldset>
  );
}

function TimerIcon({ out }: { out?: boolean }) {
  return (
    <Svg w={24} h={24}>
      <circle cx="12.5" cy="12.5" r="10" fill="#e8e8e8" stroke="#555" />
      <circle cx="12" cy="12" r="10" fill="#f6f6f6" stroke="#222" strokeDasharray="3 1" />
      <path d="M12 4V12.5L16 7" stroke="#777" strokeWidth="2" />
      {out ? (
        <path d="M12.5 15.5H17V12.5L22.5 17.5L17 22.5V19.5H12.5Z" fill="#ff30c0" stroke="#000" />
      ) : (
        <path d="M1.5 6.5H6V3.5L11.5 8.5L6 13.5V10.5H1.5Z" fill="#5bb5b5" stroke="#000" />
      )}
    </Svg>
  );
}

const tabs = ["Осциллограф", "Сравнение цилиндров", "Эффективность работы цилиндров", "Анализ давления в цилиндре", "Электропитание"];

export default function App() {
  return (
    <div className="relative bg-white pt-[34px] pr-3 pl-1 font-['Liberation_Sans',Arial,sans-serif] text-[11px] leading-[13px] text-black">
      <div className="absolute top-[23px] right-1 left-0 text-center text-[20px] leading-6 text-[#000080]">
        <a href="http://diamag-osc.com">http://diamag-osc.com</a>
      </div>
      <div className="bg-[#f0f0f0]">
        <header className="flex h-6 items-start">
          <nav className="flex gap-[7px] pt-[7px] pl-[5px]">
            {["Файл", "Сервис", "Окна", "Помощь"].map((m) => <button key={m}>{m}</button>)}
          </nav>
          <div className="mt-px mr-2 ml-auto flex h-[21px] items-center">
            <label htmlFor="order" className="mr-[5px] text-[#000080]">Порядок работы цилиндров</label>
            <div className="relative h-[21px] w-[98px] border border-[#7a7a7a] bg-white">
              <select id="order" className="h-full w-full appearance-none bg-transparent px-[3px] outline-none">
                <option>1-3-4-2</option>
              </select>
              <Arrow className="pointer-events-none absolute top-2 right-[6px]" />
            </div>
            <div className="ml-1 flex h-[21px] w-[35px] items-center border border-[#7a7a7a] bg-white">
              <input aria-label="Цилиндр" defaultValue="1" className="w-5 min-w-0 bg-transparent pl-[6px] outline-none" />
              <div className="flex flex-col gap-1">
                <button aria-label="Больше"><Arrow className="rotate-180" /></button>
                <button aria-label="Меньше"><Arrow /></button>
              </div>
            </div>
          </div>
        </header>

        <div className="flex h-[23px] items-end gap-px">
          {tabs.map((t, i) => (
            <button
              key={t}
              className={clsx(
                "rounded-t-[3px] border border-[#808080]",
                i === 0
                  ? "h-[23px] border-b-[#f0f0f0] bg-[#f0f0f0] px-[9px]"
                  : "h-[21px] bg-linear-to-b from-[#ececec] to-[#d4d4d4] px-[7px]",
              )}
            >
              {t}
            </button>
          ))}
          <div className="-ml-px grow border-b border-[#808080]" />
        </div>

        <main className="border border-t-0 border-[#808080]">
          <Toolbar />
          <Chart />
          <ScrollRow />
          <div className="mx-auto flex h-[7px] w-[546px] items-center justify-between border border-[#a0a0a0] bg-white px-1 text-[#3399ff]">
            <Arrow className="h-[3px] w-[6px]" />
            <div className="mx-1 h-px grow bg-[repeating-linear-gradient(90deg,#3399ff_0_1px,#ffffff_1px_3px)]" />
            <Arrow className="h-[3px] w-[6px]" />
          </div>
          <div className="flex justify-center gap-[5px] pt-1 pr-[7px] pb-[2px]">
            <ChannelPanel />
            <fieldset className={clsx(group, "w-[105px]")}>
              <legend className={clsx(legend, "text-[#000080]")}>Частота</legend>
              <Knob
                value="50К" pointer="M-16 -11L-9 -10L-13 -6Z"
                labels={[["100К", -38, -19], ["250К", -4, -28], ["333К", 17, -18], ["500К", 25, -6, true], ["1К", -33, 21], ["1М", 20, 21, true]]}
              />
            </fieldset>
            <SyncPanel />
            <ControlPanel />
            <fieldset className={clsx(group, "w-[66px]")}>
              <legend className={clsx(legend, "text-[#000080]")}>Таймеры</legend>
              <div className="flex flex-col items-center gap-[2px] pt-[5px]">
                {["Таймер пуска", "Таймер остановки"].map((t, i) => (
                  <button key={t} aria-label={t} className={clsx(xp, "w-[49px] gap-1 border-[#707070]")}>
                    <TimerIcon out={i === 1} />
                    <Arrow />
                  </button>
                ))}
              </div>
            </fieldset>
          </div>
        </main>

        <footer className="flex h-5 gap-[3px] pt-[2px]">
          <div className="w-[190px] border-t border-r border-[#a0a0a0] pt-[2px] pl-1">USB Осциллограф не подключен</div>
          <div className="grow border-t border-r border-l border-[#a0a0a0]" />
          <div className="w-[49px] border-t border-l border-[#a0a0a0] pt-[2px] pl-[2px]">1.8</div>
        </footer>
      </div>
    </div>
  );
}
